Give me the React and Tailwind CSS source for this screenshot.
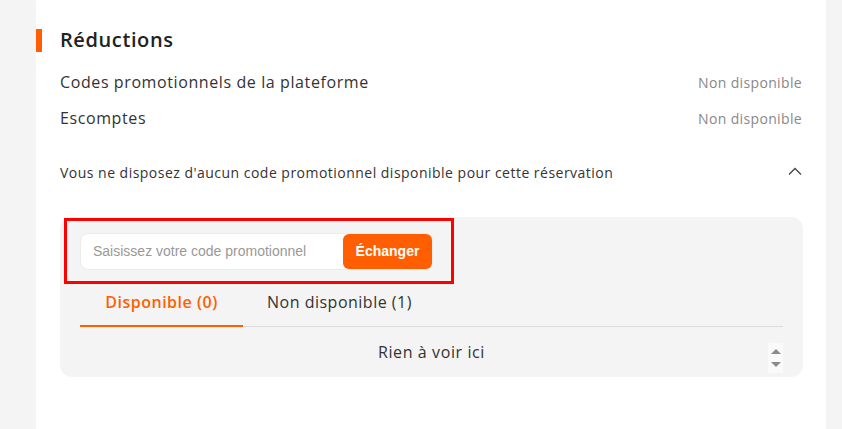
export default function App() {
  return (
    <div className="w-[842px] h-[429px] bg-[#f4f4f4] pl-[36px] overflow-hidden font-['Open_Sans',sans-serif]">
      <div className="w-[790px] h-full bg-white pt-[28px]">
        {/* title */}
        <div className="flex items-center h-[24px]">
          <div className="w-[6px] h-[23px] bg-[#ff5f00]" />
          <h2 className="ml-[18px] text-[20px] leading-[24px] font-semibold tracking-[0.6px] text-[#222]">Réductions</h2>
        </div>

        <div className="px-[24px]">
          <div className="mt-[18px] flex items-center justify-between h-[24px]">
            <span className="text-[16px] tracking-[0.6px] text-[#333]">Codes promotionnels de la plateforme</span>
            <span className="text-[14px] tracking-[0.35px] text-[#888]">Non disponible</span>
          </div>
          <div className="mt-[12px] flex items-center justify-between h-[24px]">
            <span className="text-[16px] tracking-[0.6px] text-[#333]">Escomptes</span>
            <span className="text-[14px] tracking-[0.35px] text-[#888]">Non disponible</span>
          </div>

          <div className="mt-[32px] flex items-center justify-between h-[20px]">
            <span className="text-[14px] tracking-[0.48px] text-[#333]">
              Vous ne disposez d'aucun code promotionnel disponible pour cette réservation
            </span>
            <svg width="14" height="8" viewBox="0 0 14 8" fill="none" className="mt-[-2px]">
              <path d="M1 7.5 L7 1.5 L13 7.5" stroke="#444" strokeWidth="1.3" />
            </svg>
          </div>

          {/* promo box */}
          <div className="relative mt-[35px] bg-[#f4f4f4] rounded-[12px] pl-[20px] pr-[20px] pt-[16px] w-[743px]">
            <div className="w-[353px] h-[37px] bg-white border border-[#ececec] rounded-[8px] flex items-center justify-between pl-[12px]">
              <span className="text-[14px] text-[#999] font-['Liberation_Sans',sans-serif]">Saisissez votre code promotionnel</span>
              <button className="h-[35px] w-[89px] rounded-[6px] bg-[#ff5f00] text-white text-[14px] font-bold font-['Liberation_Sans',sans-serif]">
                Échanger
              </button>
            </div>

            {/* tabs */}
            <div className="mt-[20px] flex border-b border-[#dcdcdc]">
              <div className="w-[163px] text-center pb-[11px] border-b-2 border-[#ff5f00] -mb-px">
                <span className="text-[16px] leading-[24px] font-semibold tracking-[0.5px] text-[#ff5f00]">Disponible (0)</span>
              </div>
              <div className="px-[24px] text-center pb-[12px]">
                <span className="text-[16px] leading-[24px] tracking-[0.5px] text-[#333]">Non disponible (1)</span>
              </div>
            </div>

            <div className="relative h-[50px] flex items-center justify-center">
              <span className="text-[16px] tracking-[0.6px] text-[#333]">Rien à voir ici</span>
              <div className="absolute right-0 top-[16px] w-[15px] h-[30px] bg-[#fafafa] flex flex-col items-center justify-center gap-[8px]">
                <svg width="10" height="5" viewBox="0 0 10 5"><path d="M0 5 L5 0 L10 5 Z" fill="#8a8a8a" /></svg>
                <svg width="10" height="5" viewBox="0 0 10 5"><path d="M0 0 L5 5 L10 0 Z" fill="#8a8a8a" /></svg>
              </div>
            </div>

            {/* highlight overlay */}
            <div className="absolute left-[4px] top-[1px] w-[390px] h-[66px] border-[3px] border-[#ff0000]" />
          </div>
        </div>
      </div>
    </div>
  );
}
